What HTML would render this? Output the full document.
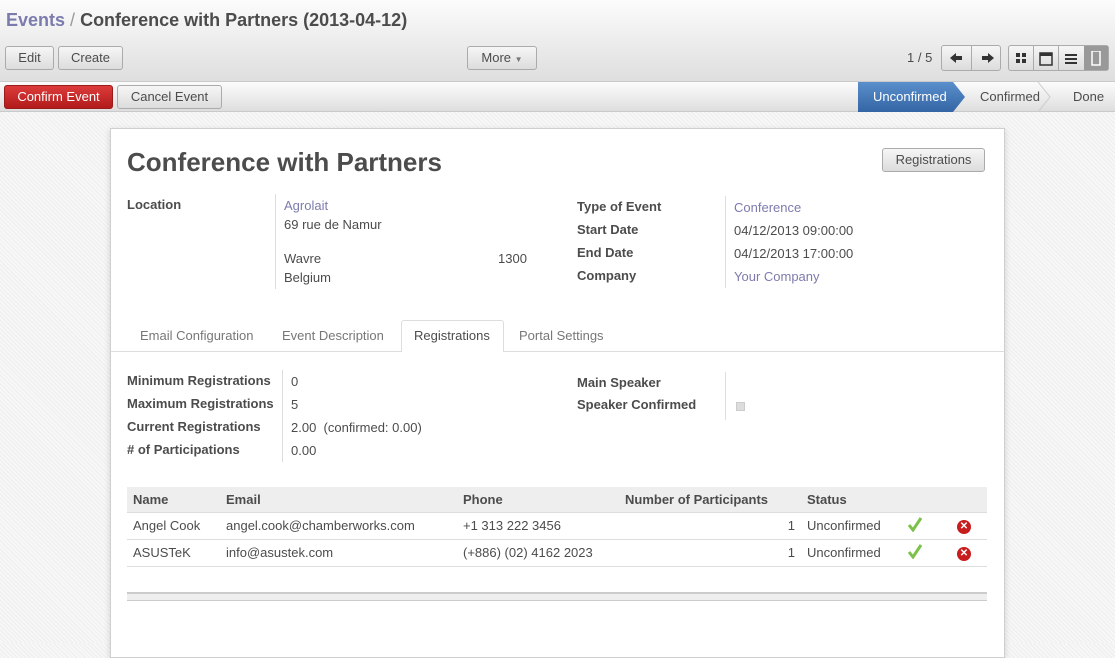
<!DOCTYPE html>
<html><head><meta charset="utf-8"><style>
*{box-sizing:border-box}
body{margin:0;width:1115px;height:643px;overflow:hidden;font-family:"Liberation Sans",sans-serif;font-size:13px;color:#4c4c4c;background:#f2f2f2;background-image:repeating-linear-gradient(45deg,#eee 0 1px,#f7f7f7 1px 3px);position:relative}
.abs{position:absolute}
.head{left:0;top:0;width:1115px;height:82px;background:linear-gradient(#fcfcfc,#dedede);border-bottom:1px solid #cacaca}
.btn{position:absolute;height:24px;border:1px solid #ababab;border-radius:3px;background:linear-gradient(#f6f6f6,#dcdcdc);font-size:13px;color:#4c4c4c;text-align:center;line-height:22px}
.sbar{left:0;top:82px;width:1115px;height:30px;background:linear-gradient(#fcfcfc,#dedede);border-bottom:1px solid #cacaca}
.sheet{left:110px;top:128px;width:895px;height:530px;background:#fff;border:1px solid #cfcfcf;box-shadow:0 2px 6px rgba(0,0,0,.15)}
.lbl{position:absolute;font-weight:bold;color:#4c4c4c}
.t{position:absolute}
.lnk{color:#7c7bad}
.vl{position:absolute;border-left:1px solid #ddd}
th,td{text-align:left;padding:0 6px;height:27px;border-bottom:1px solid #ddd;font-size:13px}
th{background:#eee;height:25px}
</style></head><body>
<div class="abs head"></div>
<div class="t" style="left:6px;top:10px;font-size:18px;font-weight:bold;color:#4c4c4c"><span class="lnk">Events</span> <span style="color:#999;font-weight:normal">/</span> Conference with Partners (2013-04-12)</div>
<div class="btn" style="left:5px;top:46px;width:49px">Edit</div>
<div class="btn" style="left:58px;top:46px;width:65px">Create</div>
<div class="btn" style="left:467px;top:46px;width:70px">More <span style="font-size:8px;color:#777">▼</span></div>
<div class="t" style="left:907px;top:50px">1 / 5</div>
<div class="btn" style="left:941px;top:45px;width:60px;height:26px"></div>
<div class="t" style="left:971px;top:45px;height:26px;border-left:1px solid #ababab"></div>
<svg class="abs" style="left:948px;top:51px" width="48" height="14"><path d="M2 7l6-5v3h6v4h-6v3z" fill="#333"/><path d="M46 7l-6-5v3h-6v4h6v3z" fill="#333"/></svg>
<div class="btn" style="left:1008px;top:45px;width:101px;height:26px"></div>
<div class="t" style="left:1084px;top:46px;width:24px;height:24px;background:#999"></div>
<div class="t" style="left:1033px;top:45px;height:26px;border-left:1px solid #ababab"></div>
<div class="t" style="left:1058px;top:45px;height:26px;border-left:1px solid #ababab"></div>
<svg class="abs" style="left:1014px;top:51px" width="90" height="16"><g fill="#333"><rect x="2" y="2" width="4" height="4"/><rect x="8" y="2" width="4" height="4"/><rect x="2" y="8" width="4" height="4"/><rect x="8" y="8" width="4" height="4"/><rect x="26" y="2" width="12" height="12" fill="none" stroke="#333" stroke-width="1.5"/><rect x="26" y="2" width="12" height="3"/><rect x="51" y="3" width="12" height="2"/><rect x="51" y="7" width="12" height="2"/><rect x="51" y="11" width="12" height="2"/></g><rect x="78" y="0" width="8" height="14" fill="none" stroke="#fff" stroke-width="1.5"/></svg>
<div class="abs sbar"></div>
<div class="btn" style="left:4px;top:85px;width:109px;background:linear-gradient(#dc3b3b,#b21b1b);border-color:#9b1a1a;color:#fff">Confirm Event</div>
<div class="btn" style="left:117px;top:85px;width:105px">Cancel Event</div>
<svg class="abs" style="left:858px;top:82px" width="257" height="30"><defs><linearGradient id="g" x1="0" y1="0" x2="0" y2="1"><stop offset="0" stop-color="#5a8fcc"/><stop offset="1" stop-color="#3465a4"/></linearGradient></defs><path d="M0 0h95l12 15-12 15H0z" fill="url(#g)"/><path d="M180 0l12 15-12 15" fill="none" stroke="#ccc"/></svg>
<div class="t" style="left:873px;top:89px;color:#fff">Unconfirmed</div>
<div class="t" style="left:980px;top:89px">Confirmed</div>
<div class="t" style="left:1073px;top:89px">Done</div>

<div class="abs sheet"></div>
<div class="t" style="left:127px;top:147px;font-size:26px;font-weight:bold;color:#4c4c4c">Conference with Partners</div>
<div class="btn" style="left:882px;top:148px;width:103px">Registrations</div>
<div class="lbl" style="left:127px;top:197px">Location</div>
<div class="vl" style="left:275px;top:194px;height:95px"></div>
<div class="t lnk" style="left:284px;top:198px">Agrolait</div>
<div class="t" style="left:284px;top:217px">69 rue de Namur</div>
<div class="t" style="left:284px;top:251px">Wavre</div>
<div class="t" style="left:498px;top:251px">1300</div>
<div class="t" style="left:284px;top:270px">Belgium</div>
<div class="lbl" style="left:577px;top:199px">Type of Event</div>
<div class="lbl" style="left:577px;top:222px">Start Date</div>
<div class="lbl" style="left:577px;top:245px">End Date</div>
<div class="lbl" style="left:577px;top:268px">Company</div>
<div class="vl" style="left:725px;top:196px;height:92px"></div>
<div class="t lnk" style="left:734px;top:200px">Conference</div>
<div class="t" style="left:734px;top:223px">04/12/2013 09:00:00</div>
<div class="t" style="left:734px;top:246px">04/12/2013 17:00:00</div>
<div class="t lnk" style="left:734px;top:269px">Your Company</div>

<div class="abs" style="left:111px;top:351px;width:893px;border-top:1px solid #ddd"></div>
<div class="abs" style="left:401px;top:320px;width:103px;height:32px;background:#fff;border:1px solid #ddd;border-bottom:none;border-radius:3px 3px 0 0"></div>
<div class="t" style="left:140px;top:328px;color:#777">Email Configuration</div>
<div class="t" style="left:282px;top:328px;color:#777">Event Description</div>
<div class="t" style="left:414px;top:328px">Registrations</div>
<div class="t" style="left:519px;top:328px;color:#777">Portal Settings</div>

<div class="lbl" style="left:127px;top:373px">Minimum Registrations</div>
<div class="lbl" style="left:127px;top:396px">Maximum Registrations</div>
<div class="lbl" style="left:127px;top:419px">Current Registrations</div>
<div class="lbl" style="left:127px;top:442px"># of Participations</div>
<div class="vl" style="left:282px;top:370px;height:92px"></div>
<div class="t" style="left:291px;top:374px">0</div>
<div class="t" style="left:291px;top:397px">5</div>
<div class="t" style="left:291px;top:420px">2.00 &nbsp;(confirmed: 0.00)</div>
<div class="t" style="left:291px;top:443px">0.00</div>
<div class="lbl" style="left:577px;top:375px">Main Speaker</div>
<div class="lbl" style="left:577px;top:397px">Speaker Confirmed</div>
<div class="vl" style="left:725px;top:372px;height:48px"></div>
<div class="abs" style="left:736px;top:402px;width:9px;height:9px;background:#ddd;border:1px solid #ccc"></div>

<table class="abs" style="left:127px;top:487px;width:860px;border-collapse:collapse">
<tr><th style="width:93px">Name</th><th style="width:237px">Email</th><th style="width:162px">Phone</th><th style="width:182px">Number of Participants</th><th style="width:100px">Status</th><th style="width:50px"></th><th></th></tr>
<tr><td>Angel Cook</td><td>angel.cook@chamberworks.com</td><td>+1 313 222 3456</td><td style="text-align:right">1</td><td>Unconfirmed</td><td><svg width="16" height="16"><path d="M2 9l4 5 8-12" fill="none" stroke="#7cc24a" stroke-width="3"/></svg></td><td><span style="display:inline-block;width:14px;height:14px;border-radius:50%;background:#c81d1d;color:#fff;font-size:10px;line-height:14px;text-align:center;font-weight:bold">✕</span></td></tr>
<tr><td>ASUSTeK</td><td>info@asustek.com</td><td>(+886) (02) 4162 2023</td><td style="text-align:right">1</td><td>Unconfirmed</td><td><svg width="16" height="16"><path d="M2 9l4 5 8-12" fill="none" stroke="#7cc24a" stroke-width="3"/></svg></td><td><span style="display:inline-block;width:14px;height:14px;border-radius:50%;background:#c81d1d;color:#fff;font-size:10px;line-height:14px;text-align:center;font-weight:bold">✕</span></td></tr>
</table>
<div class="abs" style="left:127px;top:592px;width:860px;height:9px;border-top:2px solid #ccc;border-bottom:1px solid #ccc;background:#eee"></div>
</body></html>
